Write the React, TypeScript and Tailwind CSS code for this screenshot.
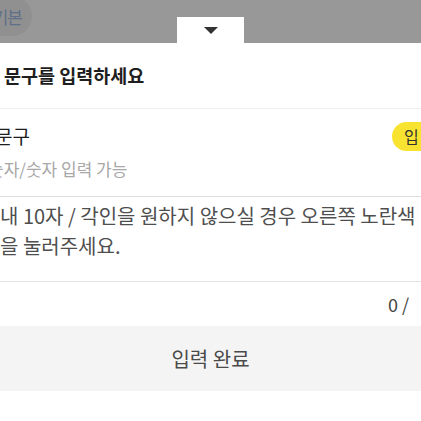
import React from "react";

export default function App() {
  const font = { fontFamily: '"Noto Sans CJK KR", "Noto Sans", sans-serif' };
  return (
    <div className="relative w-[421px] h-[421px] overflow-hidden bg-white flex flex-col" style={font}>
      <div className="relative h-[43px] bg-[#989898] flex justify-center items-end shrink-0">
        <div className="absolute left-[-16px] top-[-4px] w-[48px] h-[40px] rounded-full bg-[#909090] flex items-center justify-end pr-[10px]">
          <span className="text-[17px] leading-none text-[#5f6f88] tracking-[-1px]">기본</span>
        </div>
        <div className="w-[67px] h-[26px] bg-white flex items-center justify-center">
          <svg width="14" height="7" viewBox="0 0 14 7">
            <path d="M0 0 L14 0 L7 7 Z" fill="#333" />
          </svg>
        </div>
      </div>

      <div className="h-[66px] shrink-0 flex items-center pl-[4px] border-b border-[#efefef]">
        <span className="text-[18.5px] font-bold text-[#1e1e1e]">문구를 입력하세요</span>
      </div>

      <div className="h-[88px] shrink-0 flex flex-col border-b border-[#dedede]">
        <div className="flex items-center justify-between pt-[12px]">
          <span className="text-[19px] text-[#1e1e1e] ml-[-5px] leading-[30px]">문구</span>
          <div className="h-[29px] w-[44px] mr-[-15px] rounded-full bg-[#f9e331] flex items-center pl-[12px]">
            <span className="text-[16px] text-[#333] leading-none">입</span>
          </div>
        </div>
        <div className="mt-[6px] ml-[-12px] text-[17px] text-[#a8a8a8] leading-[24px] whitespace-nowrap">숫자/숫자 입력 가능</div>
      </div>

      <div className="h-[85px] shrink-0 pt-[4px] border-b border-[#e2e2e2]">
        <p className="text-[20px] leading-[30px] text-[#4e4e4e] whitespace-nowrap">내 10자 / 각인을 원하지 않으실 경우 오른쪽 노란색</p>
        <p className="text-[20px] leading-[30px] text-[#4e4e4e] whitespace-nowrap">을 눌러주세요.</p>
      </div>

      <div className="h-[44px] shrink-0 flex items-center justify-end pr-[12px]">
        <span className="text-[18px] text-[#444] leading-none">0 /</span>
      </div>

      <div className="h-[65px] shrink-0 bg-[#f4f4f4] flex items-center justify-center">
        <span className="text-[20px] text-[#4a4a4a]">입력 완료</span>
      </div>
    </div>
  );
}
